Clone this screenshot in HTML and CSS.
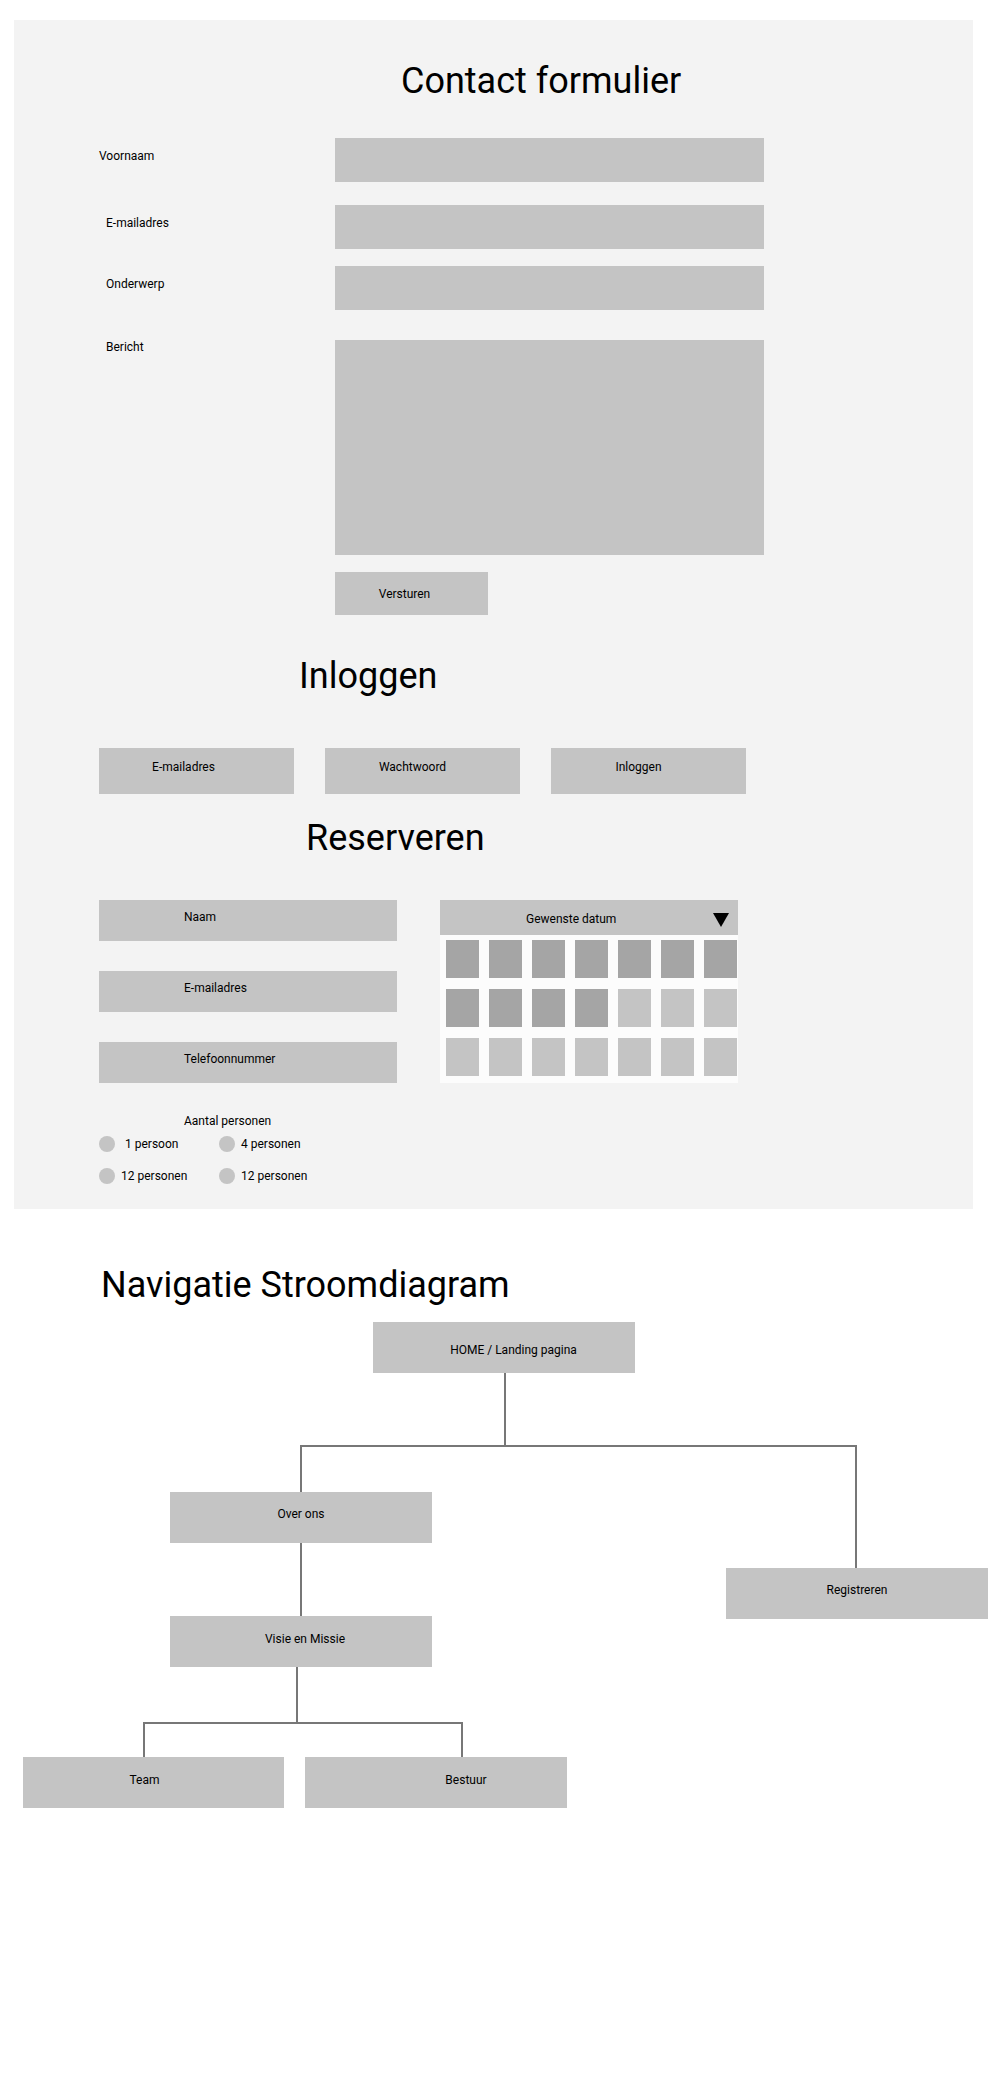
FILE: index.html
```html
<!DOCTYPE html>
<html lang="nl">
<head>
    <meta charset="UTF-8">
    <meta name="viewport" content="width=device-width, initial-scale=1.0">
    <title>Wireframes</title>
    <link rel="stylesheet" href="styles.css">
</head>
<body>
    <div class="panel">
        <h1 class="title title-contact">Contact formulier</h1>
        <form class="contact-form">
            <div class="form-row">
                <label class="form-label label-first">Voornaam</label>
                <input class="field" type="text">
            </div>
            <div class="form-row row-email">
                <label class="form-label">E-mailadres</label>
                <input class="field" type="email">
            </div>
            <div class="form-row row-subject">
                <label class="form-label">Onderwerp</label>
                <input class="field" type="text">
            </div>
            <div class="form-row row-message">
                <label class="form-label label-message">Bericht</label>
                <textarea class="field field-message"></textarea>
            </div>
            <div class="form-actions">
                <button type="button" class="send-btn">Versturen</button>
            </div>
        </form>

        <h1 class="title title-login">Inloggen</h1>
        <div class="login-row">
            <div class="login-box login-first">E-mailadres</div>
            <div class="login-box">Wachtwoord</div>
            <div class="login-box">Inloggen</div>
        </div>

        <h1 class="title title-reserve">Reserveren</h1>
        <div class="reserve-row">
            <div class="reserve-fields">
                <div class="reserve-box">Naam</div>
                <div class="reserve-box">E-mailadres</div>
                <div class="reserve-box">Telefoonnummer</div>
            </div>
            <div class="datepicker">
                <div class="date-head">
                    <span>Gewenste datum</span>
                    <span class="date-arrow"></span>
                </div>
                <div class="date-grid">
                    <span class="day day-taken"></span>
                    <span class="day day-taken"></span>
                    <span class="day day-taken"></span>
                    <span class="day day-taken"></span>
                    <span class="day day-taken"></span>
                    <span class="day day-taken"></span>
                    <span class="day day-taken"></span>
                    <span class="day day-taken"></span>
                    <span class="day day-taken"></span>
                    <span class="day day-taken"></span>
                    <span class="day day-taken"></span>
                    <span class="day"></span>
                    <span class="day"></span>
                    <span class="day"></span>
                    <span class="day"></span>
                    <span class="day"></span>
                    <span class="day"></span>
                    <span class="day"></span>
                    <span class="day"></span>
                    <span class="day"></span>
                    <span class="day"></span>
                </div>
            </div>
        </div>

        <p class="persons-label">Aantal personen</p>
        <div class="persons">
            <span class="option option-wide">1 persoon</span>
            <span class="option">4 personen</span>
            <span class="option">12 personen</span>
            <span class="option">12 personen</span>
        </div>
    </div>

    <h1 class="title title-nav">Navigatie Stroomdiagram</h1>
    <div class="flow">
        <svg class="flow-lines" width="1000" height="789" viewBox="0 0 1000 789">
            <g fill="none" stroke="#777" stroke-width="2">
                <path d="M505 67 V140"/>
                <path d="M300 140 H857"/>
                <path d="M301 140 V186"/>
                <path d="M856 140 V262"/>
                <path d="M301 237 V310"/>
                <path d="M297 361 V417"/>
                <path d="M143 417 H463"/>
                <path d="M144 417 V451"/>
                <path d="M462 417 V451"/>
            </g>
        </svg>
        <div class="node node-home">HOME / Landing pagina</div>
        <div class="node node-about">Over ons</div>
        <div class="node node-register">Registreren</div>
        <div class="node node-vision">Visie en Missie</div>
        <div class="node node-team">Team</div>
        <div class="node node-board">Bestuur</div>
    </div>
</body>
</html>
```

FILE: styles.css
```css
* {
    box-sizing: border-box;
}

body {
    margin: 0;
    background-color: #ffffff;
    color: #000000;
    font-family: Roboto, "Noto Sans", sans-serif;
    font-size: 12px;
    line-height: 14px;
}

.panel {
    margin: 20px 0 0 14px;
    width: 959px;
    padding: 40px 0 25px 85px;
    background-color: #f3f3f3;
}

.title {
    margin: 0;
    font-size: 36px;
    font-weight: 400;
    line-height: 42px;
}

.title-contact {
    margin-left: 302px;
}

/* contact form */
.contact-form {
    margin-top: 36px;
}

.form-row {
    display: flex;
}

.row-email {
    margin-top: 23px;
}

.row-subject {
    margin-top: 17px;
}

.row-message {
    margin-top: 30px;
}

.form-label {
    width: 236px;
    padding: 11px 0 0 7px;
}

.label-first {
    padding-left: 0;
}

.label-message {
    padding-top: 0;
}

.field {
    display: block;
    width: 429px;
    height: 44px;
    margin: 0;
    padding: 0;
    border: none;
    background-color: #c4c4c4;
}

.field-message {
    height: 215px;
    resize: none;
}

.form-actions {
    margin: 17px 0 0 236px;
}

.send-btn {
    width: 153px;
    height: 43px;
    padding: 0 14px 0 0;
    border: none;
    background-color: #c4c4c4;
    color: #000000;
    font: 12px/14px Roboto, "Noto Sans", sans-serif;
}

/* login */
.title-login {
    margin: 40px 0 0 200px;
}

.login-row {
    display: flex;
    gap: 31px;
    margin-top: 51px;
}

.login-box {
    width: 195px;
    height: 46px;
    padding: 12px 20px 0 0;
    text-align: center;
    background-color: #c4c4c4;
}

.login-first {
    padding-right: 26px;
}

/* reserveren */
.title-reserve {
    margin: 23px 0 0 207px;
}

.reserve-row {
    display: flex;
    align-items: flex-start;
    gap: 43px;
    margin-top: 41px;
}

.reserve-fields {
    display: flex;
    flex-direction: column;
    gap: 30px;
    width: 298px;
}

.reserve-box {
    height: 41px;
    padding: 10px 0 0 85px;
    background-color: #c4c4c4;
}

.datepicker {
    width: 298px;
}

.date-head {
    display: flex;
    height: 35px;
    padding: 12px 9px 0 86px;
    background-color: #c4c4c4;
}

.date-arrow {
    width: 0;
    height: 0;
    margin: 1px 0 0 auto;
    border-left: 8.5px solid transparent;
    border-right: 8.5px solid transparent;
    border-top: 14px solid #000000;
}

.date-grid {
    display: grid;
    grid-template-columns: repeat(7, 33px);
    grid-auto-rows: 38px;
    column-gap: 10px;
    row-gap: 11px;
    padding: 5px 1px 7px 6px;
    background-color: #fcfcfc;
}

.day {
    background-color: #c4c4c4;
}

.day-taken {
    background-color: #a5a5a5;
}

.persons-label {
    margin: 31px 0 0 85px;
}

.persons {
    display: grid;
    grid-template-columns: 120px auto;
    justify-items: start;
    row-gap: 16px;
    margin-top: 8px;
}

.option {
    display: flex;
    align-items: center;
    gap: 6px;
    height: 16px;
}

.option::before {
    content: "";
    width: 16px;
    height: 16px;
    border-radius: 50%;
    background-color: #c4c4c4;
}

.option-wide {
    gap: 10px;
}

/* stroomdiagram */
.title-nav {
    margin: 55px 0 0 101px;
}

.flow {
    position: relative;
    height: 789px;
}

.flow-lines {
    position: absolute;
    left: 0;
    top: 0;
}

.node {
    position: absolute;
    width: 262px;
    height: 51px;
    padding-top: 16px;
    text-align: center;
    background-color: #c4c4c4;
}

.node-home {
    left: 373px;
    top: 16px;
    padding: 21px 0 0 19px;
}

.node-about {
    left: 170px;
    top: 186px;
    padding-top: 15px;
}

.node-register {
    left: 726px;
    top: 262px;
    padding-top: 15px;
}

.node-vision {
    left: 170px;
    top: 310px;
    padding-left: 8px;
}

.node-team {
    left: 23px;
    top: 451px;
    width: 261px;
    padding-right: 18px;
}

.node-board {
    left: 305px;
    top: 451px;
    padding-left: 60px;
}
```
